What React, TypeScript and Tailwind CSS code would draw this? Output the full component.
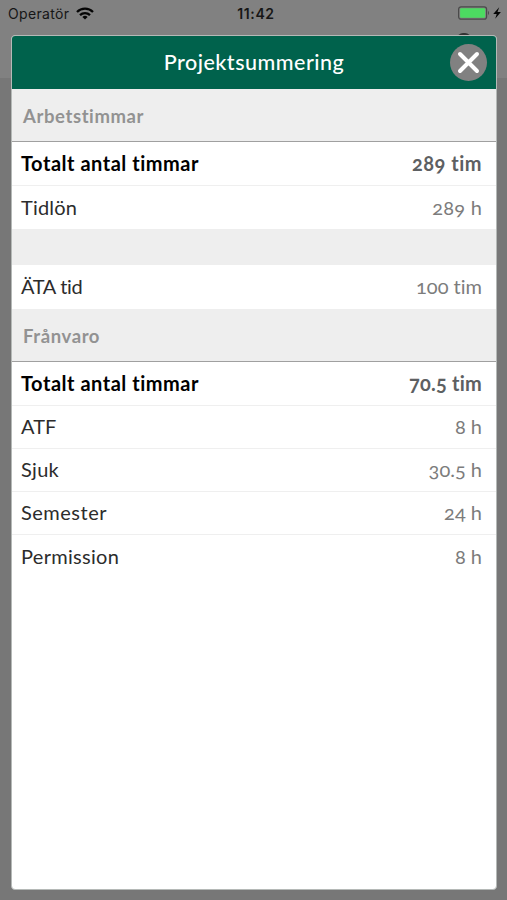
type Row = {
  label: string;
  value: string;
  bold?: boolean;
  labelClass?: string;
  valueClass?: string;
};

const workRows: Row[] = [
  {
    label: "Totalt antal timmar",
    value: "289 tim",
    bold: true,
    labelClass: "tracking-[0.52px]",
    valueClass: "tracking-[0.5px]",
  },
  { label: "Tidlön", value: "289 h", labelClass: "tracking-[0.2px]", valueClass: "tracking-[0.2px]" },
];

const extraRows: Row[] = [
  { label: "ÄTA tid", value: "100 tim", labelClass: "tracking-[-0.35px]" },
];

const absenceRows: Row[] = [
  {
    label: "Totalt antal timmar",
    value: "70.5 tim",
    bold: true,
    labelClass: "tracking-[0.52px]",
    valueClass: "tracking-[0.2px]",
  },
  { label: "ATF", value: "8 h" },
  { label: "Sjuk", value: "30.5 h", labelClass: "tracking-[0.3px]" },
  { label: "Semester", value: "24 h", labelClass: "tracking-[0.5px]" },
  { label: "Permission", value: "8 h", labelClass: "tracking-[0.3px]" },
];

function StatusBar() {
  return (
    <div className="grid grid-cols-3 items-center h-7 pl-2 pr-[5px] bg-[#818181] font-['Inter',sans-serif] text-[14px] text-[#161616]">
      <div className="flex items-center gap-[7px] -mt-0.5">
        <span className="tracking-[0.35px]">Operatör</span>
        <svg viewBox="0 0 18 13" className="w-[18px] h-[13px]" fill="none" stroke="#050505" strokeWidth="2.3">
          <path d="M1 5 A11.4 11.4 0 0 1 17 5" />
          <path d="M4 8.2 A7.2 7.2 0 0 1 14 8.2" />
          <path d="M9 12.5 L6.4 9.9 A3.8 3.8 0 0 1 11.6 9.9 Z" fill="#050505" stroke="none" />
        </svg>
      </div>
      <span className="-mt-0.5 pl-0.5 text-center font-semibold tracking-[0.6px]">11:42</span>
      <div className="flex items-center justify-end -mt-0.5">
        <svg viewBox="0 0 44 16" className="w-11 h-4">
          <rect x="0.6" y="1.8" width="28" height="12.4" rx="2.5" fill="none" stroke="#4a4a4a" strokeWidth="1.2" />
          <rect x="2.1" y="3.3" width="25" height="9.4" rx="1" fill="#4cdb61" />
          <path d="M30 5.8 Q32 8 30 10.3 Z" fill="#4a4a4a" />
          <path d="M41.2 2.3 L35.2 9 H38.7 L37.2 13.8 L42.9 7.1 H39.5 Z" fill="#050505" />
        </svg>
      </div>
    </div>
  );
}

function SectionHeader({ title }: { title: string }) {
  return (
    <h2 className="flex items-center h-[53px] pt-[3px] pl-[11px] bg-[#eeeeee] border-b border-[#a0a0a0] text-[18.5px] font-bold tracking-[0.6px] text-[#929292]">
      {title}
    </h2>
  );
}

function Rows({ rows }: { rows: Row[] }) {
  return (
    <ul className="divide-y divide-[#efefef]">
      {rows.map((row) => (
        <li
          key={row.label}
          className={`flex items-center justify-between h-[43px] first:h-11 pl-[9px] pr-[14px] pb-0.5 text-[20px] ${
            row.bold ? "font-bold" : ""
          }`}
        >
          <span className={`${row.bold ? "text-black" : "text-[#2c2c2c]"} ${row.labelClass ?? ""}`}>
            {row.label}
          </span>
          <span
            className={`oldstyle-nums ${row.bold ? "text-[#5d6062]" : "text-[#7c7c7c]"} ${
              row.valueClass ?? ""
            }`}
          >
            {row.value}
          </span>
        </li>
      ))}
    </ul>
  );
}

export default function App() {
  return (
    <div className="relative flex flex-col h-[900px] bg-[#777777] font-['Lato',sans-serif] [font-variant-ligatures:none] overflow-hidden">
      <StatusBar />
      <div className="h-[50px] bg-[#818181]" />

      {/* Edge of the button hidden under the modal */}
      <div className="absolute left-[457px] top-[33px] w-[14px] h-3 rounded-full bg-[#333]" />

      {/* Modal */}
      <div className="absolute left-[11px] top-[35px] w-[486px] h-[855px] rounded-[4px] border border-[#b5b9b7] bg-white overflow-hidden">
        <header className="relative flex items-center justify-center h-[53px] bg-[#00624c]">
          <h1 className="text-[21.5px] font-medium tracking-[0.5px] text-white">Projektsummering</h1>
          <button
            className="absolute right-[9px] top-[7.5px] w-[37px] h-[37px] rounded-full bg-[#818181]"
            aria-label="Stäng"
          >
            <svg viewBox="0 0 37 37" stroke="#fff" strokeWidth="4" strokeLinecap="round">
              <path d="M10 10 L27 27 M27 10 L10 27" />
            </svg>
          </button>
        </header>

        <SectionHeader title="Arbetstimmar" />
        <Rows rows={workRows} />
        <div className="h-9 bg-[#eeeeee]" />
        <Rows rows={extraRows} />
        <SectionHeader title="Frånvaro" />
        <Rows rows={absenceRows} />
      </div>
    </div>
  );
}
